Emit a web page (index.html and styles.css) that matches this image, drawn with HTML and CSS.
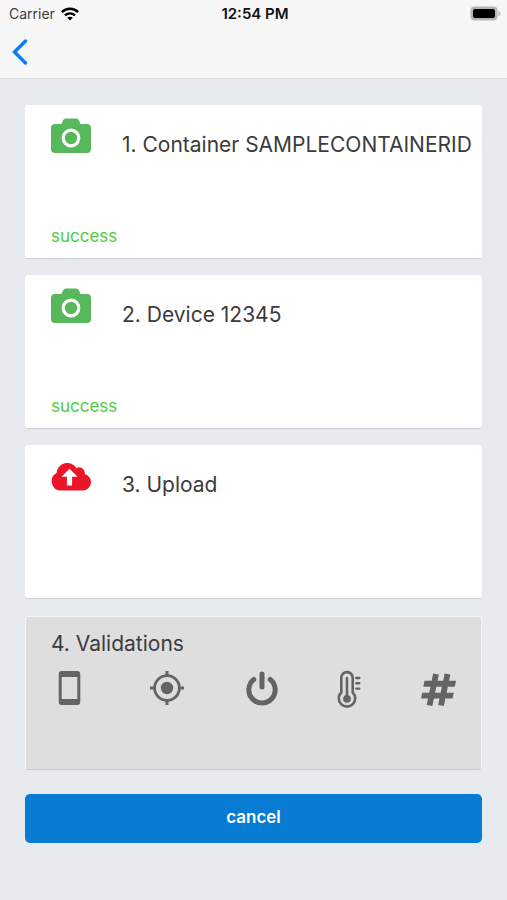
FILE: index.html
```html
<!DOCTYPE html>
<html lang="en">
<head>
<meta charset="utf-8">
<meta name="viewport" content="width=device-width, initial-scale=1">
<title>Validations</title>
<link rel="stylesheet" href="styles.css">
</head>
<body>
<header class="top">
  <div class="status">
    <div class="status-left">
      <span>Carrier</span>
      <svg class="wifi" viewBox="0 0 18 14" aria-hidden="true">
        <g fill="none" stroke="#000" stroke-width="2.5">
          <path d="M.9 5.1C5.4.7 12.6.7 17.1 5.1"/>
          <path d="M4 8.4c2.9-2.6 7.1-2.6 10 0"/>
        </g>
        <path d="M6.200 10.700c1.700-1.300 3.900-1.300 5.600 0L9 13.600z"/>
      </svg>
    </div>
    <span class="time">12:54 PM</span>
    <svg class="battery" viewBox="0 0 31 15" aria-hidden="true">
      <rect x=".5" y=".5" width="27" height="14" rx="4" fill="#b4b4b4"/>
      <path d="M28.500 5c2.600.8 2.600 4.200 0 5z" fill="#b4b4b4"/>
      <rect x="3" y="3" width="22" height="9" rx="2"/>
    </svg>
  </div>
  <nav class="nav">
    <button class="back" type="button" aria-label="Back">
      <svg viewBox="0 0 16 26" aria-hidden="true"><path d="M13.500 2 2.500 13l11 11" fill="none" stroke="#087cf8" stroke-width="3.400" stroke-linecap="round" stroke-linejoin="miter"/></svg>
    </button>
  </nav>
</header>
<main class="content">
  <section class="card">
    <div class="row">
      <svg class="icon" viewBox="0 0 40 36" aria-hidden="true">
        <path fill="#57b85b" d="M4 6h6.500l1.300-3.200Q12.700.5 15 .5h10q2.300 0 3.200 2.300L29.500 6H36q4 0 4 4v21q0 4-4 4H4q-4 0-4-4V10q0-4 4-4z"/>
        <circle cx="20" cy="20" r="7.800" fill="none" stroke="#fff" stroke-width="3.200"/>
      </svg>
      <h2 class="title">1. Container SAMPLECONTAINERID</h2>
    </div>
    <p class="state">success</p>
  </section>
  <section class="card">
    <div class="row">
      <svg class="icon" viewBox="0 0 40 36" aria-hidden="true">
        <path fill="#57b85b" d="M4 6h6.500l1.300-3.200Q12.700.5 15 .5h10q2.300 0 3.200 2.300L29.500 6H36q4 0 4 4v21q0 4-4 4H4q-4 0-4-4V10q0-4 4-4z"/>
        <circle cx="20" cy="20" r="7.800" fill="none" stroke="#fff" stroke-width="3.200"/>
      </svg>
      <h2 class="title">2. Device 12345</h2>
    </div>
    <p class="state">success</p>
  </section>
  <section class="card">
    <div class="row">
      <svg class="icon" viewBox="0 0 40 36" aria-hidden="true">
        <path fill="#eb1528" d="M9.500 32.500A9.300 9.300 0 0 1 5.600 15 10.700 10.700 0 0 1 25.500 10.200 5.500 5.500 0 0 1 33.700 16 8.400 8.400 0 0 1 32 32.500z"/>
        <path fill="#fff" d="m18.500 10.700 8 8h-5.400v8.800h-5.200v-8.800h-5.400z"/>
      </svg>
      <h2 class="title">3. Upload</h2>
    </div>
  </section>
  <section class="card muted">
    <h2 class="title">4. Validations</h2>
    <div class="checks">
      <svg class="check-phone" viewBox="1 0 38 40" role="img" aria-label="Phone">
        <path fill="#646464" fill-rule="evenodd" d="M12 3h15a3.300 3.300 0 0 1 3.300 3.300v27.400A3.300 3.300 0 0 1 27 37H12a3.300 3.300 0 0 1-3.300-3.300V6.300A3.300 3.300 0 0 1 12 3zm-.3 6v22h15.600V9z"/>
      </svg>
      <svg class="check-location" viewBox="-1 0 42 40" role="img" aria-label="Location">
        <circle cx="20" cy="20" r="6.200" fill="#646464"/>
        <circle cx="20" cy="20" r="12.400" fill="none" stroke="#646464" stroke-width="2.800"/>
        <path d="M20 3v5M20 32v5M3 20h5M32 20h5" stroke="#646464" stroke-width="3"/>
      </svg>
      <svg class="check-power" viewBox="3 0 34 40" role="img" aria-label="Power">
        <path d="M11.800 11.500a13.200 13.200 0 1 0 16.400 0M20 6v13" fill="none" stroke="#646464" stroke-width="5" stroke-linecap="round"/>
      </svg>
      <svg class="check-temperature" viewBox="7 0 26 40" role="img" aria-label="Temperature">
        <g fill="none" stroke="#646464" stroke-width="2.600">
          <path d="M12.300 24.500V9.800a5.700 5.700 0 0 1 11.400 0v14.700a8.200 8.200 0 1 1-11.400 0z"/>
          <path d="M18 10v20" stroke-linecap="round"/>
          <path d="M27.300 10h3M27.300 15.300h3M27.300 20.600h3" stroke-width="2.400" stroke-linecap="round"/>
        </g>
        <circle cx="18" cy="30.800" r="3.900" fill="#646464"/>
      </svg>
      <svg class="check-number" viewBox="1 0 38 40" role="img" aria-label="Number">
        <path d="M18 6l-6.500 31.500M29.500 6 23 37.500" fill="none" stroke="#646464" stroke-width="5.800"/>
        <path d="M6.500 12.800H38l-1.200 6H5.300zM4.200 24.800h31.500L34.500 30.600H3z" fill="#646464"/>
      </svg>
    </div>
  </section>
  <button class="cancel" type="button">cancel</button>
</main>
</body>
</html>
```
FILE: styles.css
```css
* { box-sizing: border-box; }

body {
  margin: 0;
  min-height: 100vh;
  background: #e7eaef;
  color: #3b3b3d;
  font-family: Inter, "Liberation Sans", sans-serif;
}

.top {
  background: #f7f7f7;
  border-bottom: 1px solid #dcdddf;
}

.status {
  display: grid;
  grid-template-columns: 1fr auto 1fr;
  align-items: center;
  height: 27px;
  padding: 0 6px 0 9px;
  font-size: 14px;
}

.status-left {
  display: flex;
  align-items: center;
  gap: 6px;
}

.wifi { width: 18px; height: 14px; }

.time { color: #111; font-size: 15px; font-weight: 600; }

.battery {
  justify-self: end;
  width: 31px;
  height: 15px;
}

.nav {
  display: flex;
  align-items: center;
  height: 51px;
  padding: 0 12px 2px;
}

.back {
  padding: 0;
  border: 0;
  background: none;
  line-height: 0;
}

.back svg { width: 16px; height: 26px; }

.content {
  display: flex;
  flex-direction: column;
  gap: 16px;
  padding: 26px 25px;
}

.card {
  display: flex;
  flex-direction: column;
  min-height: 154px;
  padding: 13px 0 12px 26px;
  border-bottom: 1px solid #cdced1;
  border-radius: 3px;
  background: #fff;
}

.row {
  display: flex;
  align-items: flex-start;
  gap: 31px;
}

.icon {
  flex: none;
  width: 40px;
  height: 36px;
}

.title {
  margin: 0;
  font-size: 21px;
  font-weight: 400;
  line-height: 28px;
  white-space: nowrap;
}

.row .title { padding-top: 13px; }

.state {
  margin: auto 0 0;
  color: #4fce3b;
  font-size: 17px;
  line-height: 20px;
}

.muted {
  margin-top: 1px;
  padding: 13px 24px 12px 25px;
  border: 1px solid #f3f4f5;
  border-bottom-color: #c8c8ca;
  background: #dedede;
}

.checks {
  display: flex;
  justify-content: space-between;
  padding-top: 10px;
}

.checks svg { height: 40px; }

.check-phone,
.check-number { width: 38px; }

.check-location { width: 42px; }

.check-power { width: 34px; }

.check-temperature { width: 26px; }

.cancel {
  height: 49px;
  margin-top: 8px;
  padding: 0 16px 3px;
  border: 0;
  border-radius: 5px;
  background: #087bd3;
  color: #fff;
  font: 600 17px Inter, "Liberation Sans", sans-serif;
}
```
